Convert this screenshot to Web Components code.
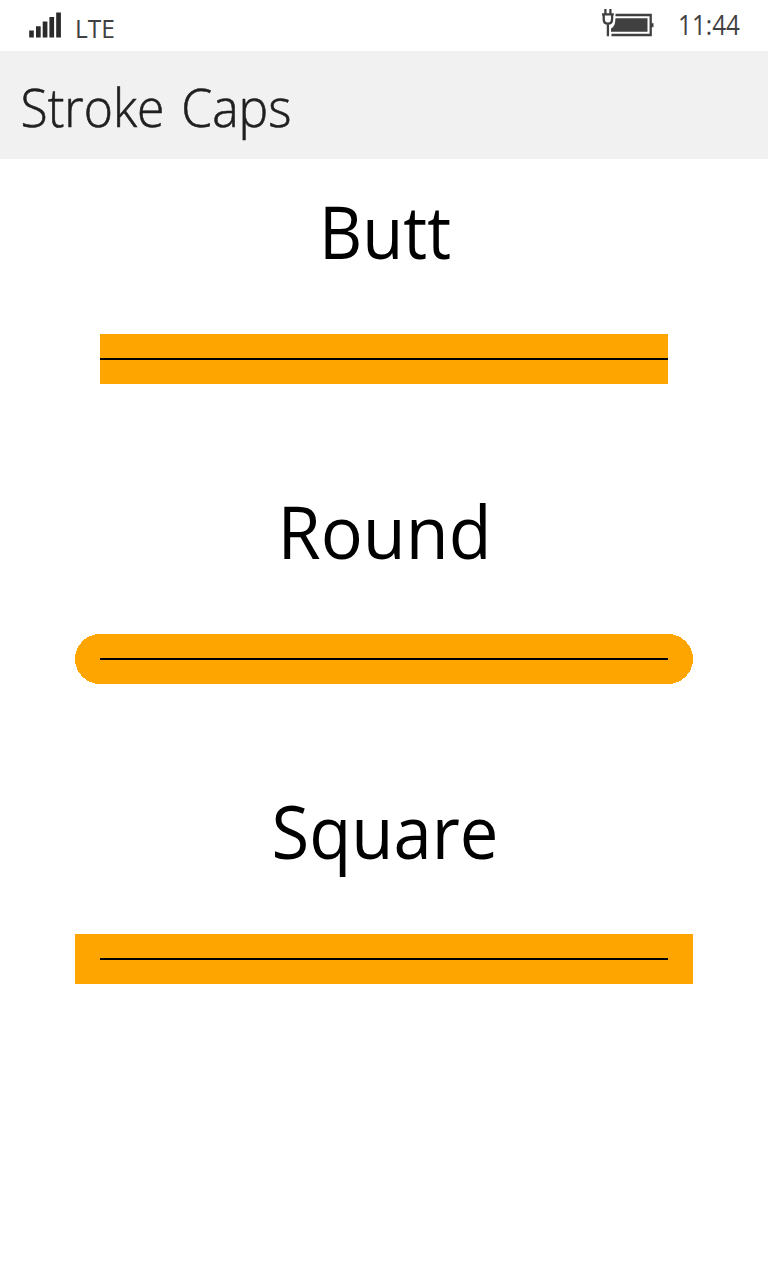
<!DOCTYPE html>
<html lang="en">
<head>
<meta charset="utf-8">
<title>Stroke Caps</title>
<style>
body{margin:0;background:#fff;font-family:"Open Sans","Noto Sans",sans-serif}
</style>
</head>
<body>
<caps-page></caps-page>
<script>
const define=(name,html,setup)=>customElements.define(name,class extends HTMLElement{
  connectedCallback(){
    if(this.shadowRoot)return;
    const t=document.createElement('template');
    t.innerHTML=html;
    this.attachShadow({mode:'open'}).append(t.content.cloneNode(true));
    if(setup)setup(this,this.shadowRoot);
  }
});

define('signal-icon',`<style>:host{display:block;width:33px;height:27px}svg{display:block}</style>
<svg width="33" height="27" fill="#2b2b2b"><path d="M.2 19.500h4.600v7H.2zM7 15.300h4.700v11.200H7zM13.700 10.500h4.700v16h-4.700zM20.400 6h4.700v20.500h-4.700zM27.200 1.500h4.700v25h-4.700z"/></svg>`);

define('battery-icon',`<style>:host{display:block;width:54px;height:29px}svg{display:block}</style>
<svg width="54" height="29" fill="none" stroke="#404040" stroke-width="2.300"><path d="M13.500 6H48.700V26H9.500"/><path d="M13.500 9.200H45.500V22.800H9V19.500Q12.500 17.500 13 13.500Z" fill="#404040" stroke="none"/><path d="M49 14.200H51.500V18.200H49Z" fill="#404040" stroke="none"/><path d="M3.400 0V5M8.400 0V5M0 5.300H11.800M1.700 6V10Q1.700 14.700 5.900 14.700Q10.100 14.700 10.100 10V6M5.900 15V27.200"/></svg>`);

define('status-bar',`<style>
:host{display:flex;height:51px;box-sizing:border-box;justify-content:space-between;align-items:flex-start;padding:9px 0 0 29px;background:#fff}
div{display:flex}
.left{padding-top:2px;gap:8px}
svg{display:block;overflow:visible}
text{fill:#404040;font-family:"Open Sans",sans-serif}
.right{gap:20px}
</style>
<div class="left"><signal-icon></signal-icon><svg width="50" height="38"><text x="5" y="27" font-size="26" textLength="40" lengthAdjust="spacingAndGlyphs">LTE</text></svg></div>
<div class="right"><battery-icon></battery-icon><svg width="92" height="42"><text x="2" y="25.500" font-size="28" textLength="62" lengthAdjust="spacingAndGlyphs">11:44</text></svg></div>`);

define('page-title',`<style>
:host{display:block;height:108px;background:#f1f1f1;color:#1f1f1f}
svg{display:block}text{font-family:"Open Sans",sans-serif;font-weight:300;fill:#1f1f1f;stroke:#1f1f1f;stroke-width:.6px;word-spacing:4px}
</style><svg width="320" height="108"><text x="20.500" y="76" font-size="52.500" textLength="271" lengthAdjust="spacingAndGlyphs"></text></svg>`,
(el,root)=>{root.querySelector('text').textContent=el.getAttribute('label')});

define('cap-sample',`<style>
:host{display:block;height:300px}
svg{display:block}
text{font-family:"Open Sans",sans-serif;font-size:74px;fill:#000}
</style><svg width="768" height="300"><text y="100" lengthAdjust="spacingAndGlyphs"></text>
<path class="band" d="M100 200H668" stroke="#ffa500" stroke-width="50" shape-rendering="crispEdges"/>
<path d="M100 200H668" stroke="#000" stroke-width="2" shape-rendering="crispEdges"/></svg>`,
(el,root)=>{
  const t=root.querySelector('text');
  t.textContent=el.getAttribute('label');
  t.setAttribute('x',el.getAttribute('start'));
  t.setAttribute('textLength',el.getAttribute('span'));
  root.querySelector('.band').setAttribute('stroke-linecap',el.getAttribute('cap'));
});

define('caps-page',`<style>:host{display:block;width:768px;height:1280px;background:#fff;overflow:hidden}</style>
<status-bar></status-bar>
<page-title label="Stroke Caps"></page-title>
<cap-sample label="Butt" cap="butt" start="319" span="132"></cap-sample>
<cap-sample label="Round" cap="round" start="277.500" span="214"></cap-sample>
<cap-sample label="Square" cap="square" start="271.500" span="227"></cap-sample>`);
</script>
</body>
</html>
